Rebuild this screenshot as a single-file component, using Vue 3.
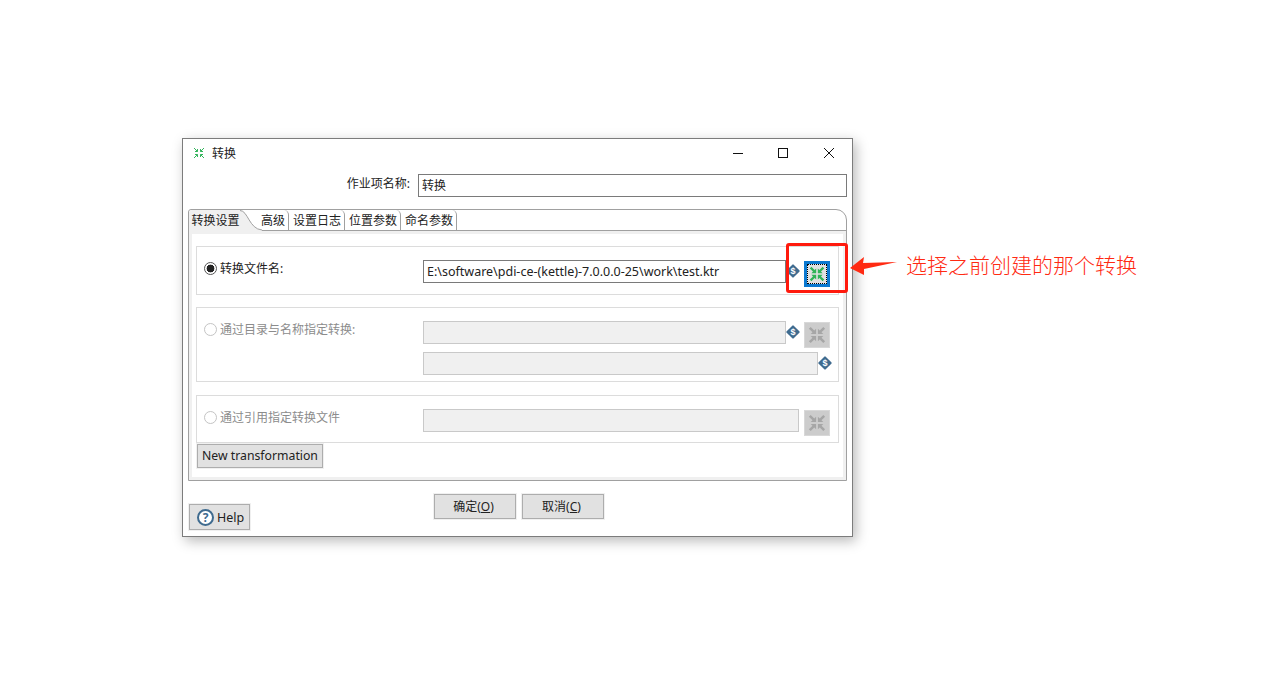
<template>
  <div class="page">
    <svg class="defs" width="0" height="0">
      <symbol id="shrink" viewBox="0 0 20 20">
        <g fill="currentColor">
          <path d="M1 3 L3 1 L7 5 L9 3 V9 H3 L5 7 Z" />
          <path d="M19 3 L17 1 L13 5 L11 3 V9 H17 L15 7 Z" />
          <path d="M1 17 L3 19 L7 15 L9 17 V11 H3 L5 13 Z" />
          <path d="M19 17 L17 19 L13 15 L11 17 V11 H17 L15 13 Z" />
        </g>
      </symbol>
      <symbol id="shrink-thin" viewBox="0 0 12 12">
        <path d="M1 1L4.5 4.5M4.5 2V4.5H2M11 1L7.5 4.5M7.5 2V4.5H10M1 11L4.5 7.5M4.5 10V7.5H2M11 11L7.5 7.5M7.5 10V7.5H10" fill="none" stroke="currentColor" />
      </symbol>
    </svg>

    <div class="window">
      <div class="titlebar">
        <svg class="title-icon"><use href="#shrink-thin" /></svg>
        <span class="title">转换</span>
        <div class="controls">
          <span class="ctl"><svg width="12" height="12" viewBox="0 0 12 12"><path d="M1 6.5H11" stroke="#111" /></svg></span>
          <span class="ctl"><svg width="12" height="12" viewBox="0 0 12 12"><rect x="1.5" y="1.5" width="9" height="9" fill="none" stroke="#111" /></svg></span>
          <span class="ctl close"><svg width="12" height="12" viewBox="0 0 12 12"><path d="M1 1L11 11M11 1L1 11" stroke="#111" /></svg></span>
        </div>
      </div>

      <div class="name-row">
        <label>作业项名称:</label>
        <div class="field name-field">转换</div>
      </div>

      <div class="folder">
        <div class="tabs">
          <div class="tab active">转换设置</div>
          <svg class="tab-curve" width="22" height="21" viewBox="0 0 22 21">
            <path d="M0 0 C8 0 9 19 22 20 V21 H0 Z" fill="#f0f0f0" />
            <path d="M0 0.5 C8 0.5 9 19 22 20" fill="none" stroke="#a0a0a0" />
          </svg>
          <div class="tab first-plain">高级</div>
          <div class="tab">设置日志</div>
          <div class="tab">位置参数</div>
          <div class="tab">命名参数</div>
        </div>

        <div class="folder-body">
          <section class="group g1">
            <div class="row">
              <div class="choice">
                <span class="radio on"></span>
                <span>转换文件名:</span>
              </div>
              <div class="field w-a path">E:\software\pdi-ce-(kettle)-7.0.0.0-25\work\test.ktr</div>
              <span class="dollar"><i>$</i></span>
              <button class="browse focused">
                <span class="focus-ring"><svg class="shrink-icon"><use href="#shrink" /></svg></span>
              </button>
            </div>
          </section>

          <section class="group g2 off">
            <div class="row">
              <div class="choice">
                <span class="radio"></span>
                <span>通过目录与名称指定转换:</span>
              </div>
              <div class="field w-a"></div>
              <span class="dollar"><i>$</i></span>
              <button class="browse"><svg class="shrink-icon"><use href="#shrink" /></svg></button>
            </div>
            <div class="row second">
              <div class="choice"></div>
              <div class="field w-b"></div>
              <span class="dollar"><i>$</i></span>
            </div>
          </section>

          <section class="group g3 off">
            <div class="row">
              <div class="choice">
                <span class="radio"></span>
                <span>通过引用指定转换文件</span>
              </div>
              <div class="field w-c"></div>
              <button class="browse"><svg class="shrink-icon"><use href="#shrink" /></svg></button>
            </div>
          </section>

          <button class="btn new-btn">New transformation</button>
        </div>
      </div>

      <div class="footer">
        <button class="btn help">
          <span class="help-icon">?</span>
          Help
        </button>
        <div class="actions">
          <button class="btn action">确定(<u>O</u>)</button>
          <button class="btn action">取消(<u>C</u>)</button>
        </div>
      </div>
    </div>

    <!-- annotation on top of the screenshot -->
    <div class="mark"></div>
    <svg class="arrow" width="48" height="20" viewBox="0 0 48 20">
      <polygon points="0,11 14,0 13,6 47,5 14,12 14,18" fill="#ff2a12" />
    </svg>
    <div class="note">选择之前创建的那个转换</div>
  </div>
</template>

<script setup>
</script>

<style>
body {
  background: #fff;
}
</style>

<style scoped>
.page {
  position: relative;
  box-sizing: border-box;
  height: 680px;
  padding: 138px 0 0 182px;
  background: #fff;
  font-family: "Noto Sans", "Noto Sans CJK SC", sans-serif;
  font-size: 12px;
  color: #222;
  overflow: hidden;
}
.defs {
  position: absolute;
}
.window {
  box-sizing: border-box;
  width: 671px;
  height: 399px;
  background: #fff;
  border: 1px solid #7c7c7c;
  box-shadow: 3px 4px 12px rgba(0, 0, 0, 0.28);
  padding: 0 5px;
}
.titlebar {
  display: flex;
  align-items: center;
  height: 28px;
  margin: 0 -5px;
  padding: 0 0 0 10px;
}
.title-icon {
  width: 12px;
  height: 12px;
  color: #34b45c;
}
.title {
  margin-left: 7px;
  font-size: 12px;
}
.controls {
  display: flex;
  margin-left: auto;
}
.ctl {
  display: flex;
  align-items: center;
  justify-content: center;
  width: 45px;
  height: 28px;
}
.ctl.close {
  width: 47px;
}
.name-row {
  display: flex;
  justify-content: flex-end;
  align-items: flex-start;
  margin-top: 7px;
}
.name-row label {
  margin-right: 8px;
  line-height: 20px;
}
.field {
  box-sizing: border-box;
  height: 23px;
  line-height: 22px;
  padding-left: 3px;
  border: 1px solid #7a7a7a;
  background: #fff;
  white-space: nowrap;
  overflow: hidden;
}
.path {
  font-size: 12.5px;
}
.name-field {
  width: 429px;
}
.folder {
  box-sizing: border-box;
  height: 272px;
  margin-top: 12px;
  border: 1px solid #a0a0a0;
  border-radius: 3px 11px 0 0;
}
.tabs {
  display: flex;
  height: 20px;
  border-bottom: 1px solid #a0a0a0;
}
.tab {
  box-sizing: border-box;
  height: 20px;
  width: 56px;
  padding: 1px 4px 0;
  line-height: 20px;
  text-align: center;
  border-right: 1px solid #a0a0a0;
  border-radius: 0 5px 0 0;
  white-space: nowrap;
}
.tab.active {
  width: 51px;
  padding: 1px 0 0 2px;
  background: #f0f0f0;
  border-right: 0;
  border-radius: 3px 0 0 0;
  height: 21px;
}
.tab.first-plain {
  width: 28px;
  padding: 1px 0 0;
  margin-left: -1px;
  text-align: left;
}
.tab-curve {
  flex: none;
}
.folder-body {
  box-sizing: border-box;
  height: 249px;
  border: 3px solid #f0f0f0;
  padding: 12px 4px 0;
}
.group {
  box-sizing: border-box;
  border: 1px solid #dcdcdc;
  padding-top: 13px;
}
.g1 {
  height: 49px;
}
.g2 {
  height: 75px;
  margin-top: 12px;
}
.g3 {
  height: 48px;
  margin-top: 13px;
}
.row {
  display: flex;
  align-items: flex-start;
}
.row.second {
  margin-top: 4px;
}
.choice {
  box-sizing: border-box;
  flex: none;
  display: flex;
  align-items: center;
  gap: 3px;
  width: 226px;
  height: 16px;
  padding-left: 7px;
}
.radio {
  box-sizing: border-box;
  width: 13px;
  height: 13px;
  border-radius: 50%;
  border: 1px solid #555;
  background: #fff;
}
.radio.on {
  background: radial-gradient(circle, #222 0 3.6px, #fff 4.2px);
}
.w-a {
  width: 363px;
}
.w-b {
  width: 395px;
}
.w-c {
  width: 376px;
}
.dollar {
  position: relative;
  flex: none;
  display: flex;
  align-items: center;
  justify-content: center;
  width: 14px;
  height: 14px;
  margin-top: 4px;
}
.dollar::before {
  content: "";
  position: absolute;
  left: 2px;
  top: 2px;
  width: 10px;
  height: 10px;
  border-radius: 1px;
  background: #3f6b8f;
  transform: rotate(45deg);
}
.dollar i {
  position: relative;
  font-family: "Liberation Sans", sans-serif;
  font-style: normal;
  font-weight: 700;
  font-size: 9px;
  line-height: 14px;
  color: #fff;
}
.browse {
  box-sizing: border-box;
  flex: none;
  display: flex;
  align-items: center;
  justify-content: center;
  width: 26px;
  height: 26px;
  margin: 1px 8px 0 auto;
  padding: 0;
  border: 1px solid #d8d8d8;
  background: #cccccc;
  color: #a6a6a6;
}
.browse.focused {
  border: 3px solid #0a78d0;
  background: #e1e1e1;
  color: #2fb457;
}
.focus-ring {
  box-sizing: border-box;
  display: flex;
  align-items: center;
  justify-content: center;
  width: 20px;
  height: 20px;
  border: 1px dotted #000;
}
.shrink-icon {
  width: 18px;
  height: 18px;
}
.focus-ring .shrink-icon {
  width: 16px;
  height: 16px;
}
.off {
  color: #8c8c8c;
}
.off .field {
  background: #f0f0f0;
  border-color: #c9c9c9;
}
.off .radio {
  border-color: #c4c4c4;
}
.btn {
  box-sizing: border-box;
  font-family: inherit;
  font-size: 12px;
  color: #222;
  background: #e1e1e1;
  border: 1px solid #adadad;
  outline: 1px solid #f0f0f0;
  padding: 0 0 2px;
}
.new-btn {
  display: block;
  width: 126px;
  height: 24px;
  margin: 1px 0 0 1px;
  font-size: 12.25px;
}
.footer {
  display: flex;
  align-items: flex-start;
  margin-top: 13px;
}
.help {
  display: flex;
  align-items: center;
  gap: 3px;
  width: 61px;
  height: 26px;
  margin: 10px 0 0 1px;
  padding: 0 0 0 7px;
  font-size: 12.5px;
}
.help-icon {
  box-sizing: border-box;
  display: flex;
  align-items: center;
  justify-content: center;
  width: 17px;
  height: 17px;
  border: 2px solid #3f6b8f;
  border-radius: 50%;
  background: #fff;
  color: #3f6b8f;
  font-size: 12px;
  font-weight: 700;
}
.actions {
  display: flex;
  gap: 6px;
  margin-left: 184px;
}
.action {
  width: 82px;
  height: 25px;
  padding-right: 3px;
}
.mark {
  position: absolute;
  left: 786px;
  top: 243px;
  box-sizing: border-box;
  width: 62px;
  height: 50px;
  border: 3px solid #ff1a0d;
  border-radius: 3px;
}
.arrow {
  position: absolute;
  left: 850px;
  top: 257px;
}
.note {
  position: absolute;
  left: 906px;
  top: 249px;
  font-family: "Noto Sans CJK SC", sans-serif;
  font-size: 21px;
  font-weight: 300;
  line-height: 30px;
  color: #ff2a12;
  white-space: nowrap;
}
</style>
